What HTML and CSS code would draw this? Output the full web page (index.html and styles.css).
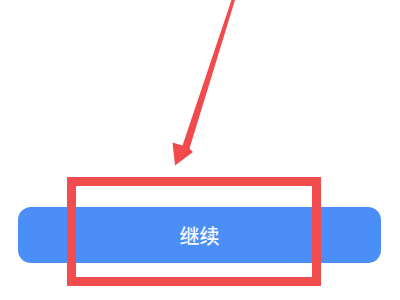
FILE: index.html
```html
<!DOCTYPE html>
<html lang="zh">
<head>
<meta charset="utf-8">
<link rel="stylesheet" href="styles.css">
</head>
<body>
<div class="page">
  <button class="continue-btn">继续</button>
  <div class="highlight-box"></div>
  <svg class="arrow" width="400" height="300" viewBox="0 0 400 300">
    <polygon points="231.5,0 235,0 189.5,148.5 193,152 175,165.5 172.5,142.5 182.5,145.5" fill="#f24a4c"/>
  </svg>
</div>
</body>
</html>
```
FILE: styles.css
```css
html, body {
  margin: 0;
  padding: 0;
  background: #ffffff;
}
.page {
  position: relative;
  width: 400px;
  height: 300px;
  overflow: hidden;
  padding-top: 207px;
  box-sizing: border-box;
}
.continue-btn {
  display: block;
  margin: 0 19px 0 18px;
  width: calc(100% - 37px);
  height: 56px;
  border: none;
  border-radius: 13px;
  background: #4b8ef7;
  color: #f4f8ff;
  font-family: "Noto Sans CJK SC", "Noto Sans", sans-serif;
  font-size: 20px;
  font-weight: 500;
  padding: 0 0 2px 0;
  padding-top: 3px;
}
.highlight-box {
  position: absolute;
  left: 67px;
  top: 177px;
  width: 254px;
  height: 109px;
  border: 9px solid #f24d4e;
  box-sizing: border-box;
}
.arrow {
  position: absolute;
  left: 0;
  top: 0;
}
```
